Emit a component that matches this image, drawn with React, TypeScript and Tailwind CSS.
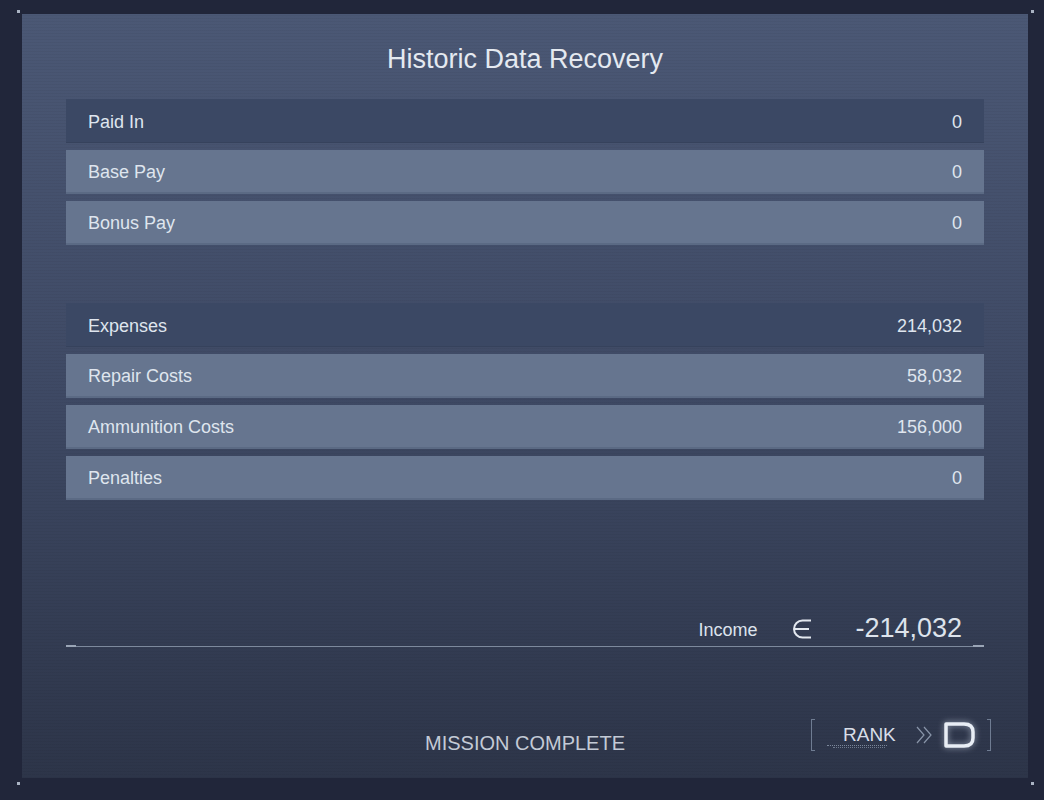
import React from "react";

const font = { fontFamily: '"Liberation Sans", Arial, sans-serif' };

function Row({ label, value, head }: { label: string; value: string; head?: boolean }) {
  return (
    <div
      className={
        "flex h-[44px] items-center justify-between pl-[22px] pr-[22px] pt-[3px] text-[18px] text-[#dfe5ee] " +
        (head ? "bg-[#3b4864] border-b border-[#36425c]" : "bg-[#66758f] border-b-2 border-[#5b6a84]")
      }
    >
      <span>{label}</span>
      <span>{value}</span>
    </div>
  );
}

export default function App() {
  return (
    <div
      className="relative w-[1044px] h-[800px] bg-[#21263a] pt-[14px] pl-[22px] pr-[16px] pb-[22px] overflow-hidden"
      style={font}
    >
      {/* corner dots */}
      <div className="absolute left-[17px] top-[10px] w-[3px] h-[3px] bg-[#aab3c3]" />
      <div className="absolute left-[1031px] top-[10px] w-[3px] h-[3px] bg-[#aab3c3]" />
      <div className="absolute left-[17px] top-[782px] w-[3px] h-[3px] bg-[#aab3c3]" />
      <div className="absolute left-[1031px] top-[782px] w-[3px] h-[3px] bg-[#aab3c3]" />

      <div className="relative h-[764px] w-[1006px] bg-gradient-to-b from-[#4b5875] via-[#3e4964] to-[#2d3549] px-[44px] pt-[29px] flex flex-col">
        <div className="pointer-events-none absolute inset-0 bg-[repeating-linear-gradient(0deg,rgba(0,0,0,0.035)_0px,rgba(0,0,0,0.035)_1px,transparent_1px,transparent_3px)]" />

        <h1 className="relative text-center text-[27px] leading-[32px] text-[#e4e9f0]">Historic Data Recovery</h1>

        <div className="relative mt-[24px] flex flex-col gap-[7px]">
          <Row label="Paid In" value="0" head />
          <Row label="Base Pay" value="0" />
          <Row label="Bonus Pay" value="0" />
        </div>

        <div className="relative mt-[58px] flex flex-col gap-[7px]">
          <Row label="Expenses" value="214,032" head />
          <Row label="Repair Costs" value="58,032" />
          <Row label="Ammunition Costs" value="156,000" />
          <Row label="Penalties" value="0" />
        </div>

        <div className="relative mt-[112px] flex h-[32px] items-center justify-end pr-[22px] text-[#dde3ec]">
          <span className="text-[18px] mr-[34px] mt-[4px]">Income</span>
          <svg width="22" height="22" viewBox="0 0 22 22" className="mr-[42px] mt-[2px]">
            <path d="M20 2.5 H11.5 A8.5 8.5 0 0 0 11.5 19.5 H20" fill="none" stroke="#e3e8ef" strokeWidth="2" />
            <path d="M3 11 H18" stroke="#e3e8ef" strokeWidth="2" />
          </svg>
          <span className="text-[27px] mt-[1px]">-214,032</span>
        </div>
        <div className="relative mt-[1px] flex items-center">
          <div className="h-[2px] w-[10px] bg-[#9aa5b6]" />
          <div className="h-px flex-1 bg-[#7d899d]" />
          <div className="h-[2px] w-[11px] bg-[#9aa5b6]" />
        </div>

        <div className="relative mt-[72px] grid grid-cols-[1fr_auto_1fr] items-start">
          <div />
          <div className="mt-[12px] text-[20px] leading-[24px] text-[#c3cad6]">MISSION COMPLETE</div>
          <div className="flex justify-end mr-[-7px]">
            <div className="relative flex h-[32px] w-[180px] items-center">
              <div className="h-[32px] w-[4px] border-l-[1.5px] border-t-[1.5px] border-b-[1.5px] border-[#6f7c92]" />
              <div className="relative ml-[28px] text-[19px] leading-[24px] text-[#d8dee8]">
                RANK
                <div className="absolute left-[-16px] top-[22px] h-px w-[60px] border-t border-dotted border-[#7c889b]" />
                <div className="absolute left-[-10px] top-[24px] h-px w-[52px] border-t border-dotted border-[#6d798d]" />
              </div>
              <svg width="20" height="20" viewBox="0 0 20 20" className="ml-[19px]">
                <path d="M2 2 L9 10 L2 18 M9 2 L16 10 L9 18" fill="none" stroke="#8995a9" strokeWidth="1.2" />
              </svg>
              <svg width="34" height="30" viewBox="0 0 34 30" className="ml-[8px] drop-shadow-[0_0_3px_rgba(220,230,245,0.6)]">
                <path d="M3 4 H21 Q30 4 30 12 V18 Q30 26 21 26 H3 Z" fill="none" stroke="#e9eef5" strokeWidth="3.5" strokeLinejoin="round" />
              </svg>
              <div className="ml-auto h-[32px] w-[4px] border-r-[1.5px] border-t-[1.5px] border-b-[1.5px] border-[#6f7c92]" />
            </div>
          </div>
        </div>
      </div>
    </div>
  );
}
